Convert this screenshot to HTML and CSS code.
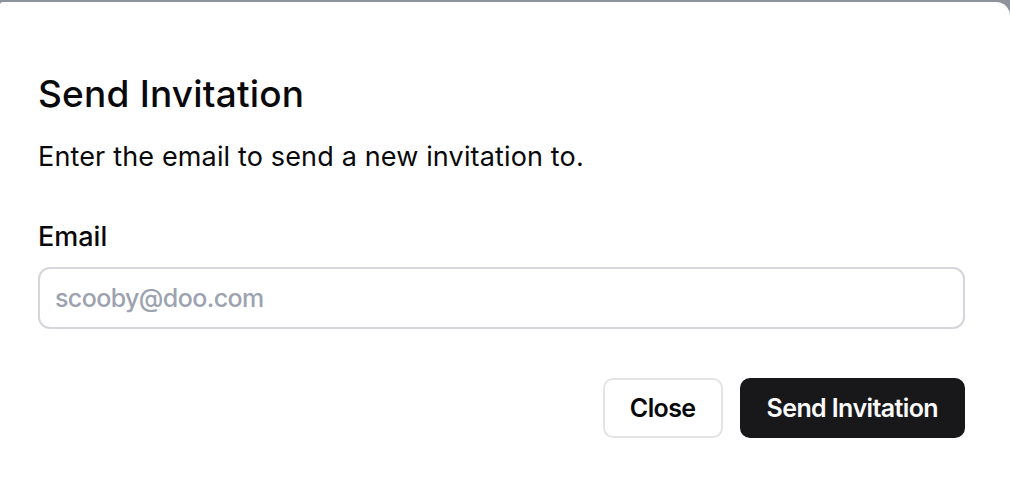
FILE: index.html
```html
<!DOCTYPE html>
<html lang="en">
<head>
<meta charset="utf-8">
<title>Send Invitation</title>
<link rel="stylesheet" href="styles.css">
</head>
<body>
<div class="modal">
  <h2 class="title">Send Invitation</h2>
  <p class="desc">Enter the email to send a new invitation to.</p>
  <label class="label" for="email">Email</label>
  <input class="input" id="email" type="email" placeholder="scooby@doo.com">
  <div class="actions">
    <button class="btn btn-outline">Close</button>
    <button class="btn btn-primary">Send Invitation</button>
  </div>
</div>
</body>
</html>
```
FILE: styles.css
```css
html, body {
  margin: 0;
  padding: 0;
  height: 100%;
}
body {
  background: #8e929b;
  font-family: Inter, "Noto Sans", "Liberation Sans", sans-serif;
  color: #09090b;
  overflow: hidden;
}
.modal {
  margin-top: 2px;
  height: calc(100% - 2px);
  box-sizing: border-box;
  background: #ffffff;
  border-radius: 3px 14px 0 0;
  padding: 72px 45px 0 38px;
  display: flex;
  flex-direction: column;
}
.title {
  margin: 0;
  font-size: 37px;
  line-height: 40px;
  font-weight: 500;
  letter-spacing: 0.2px;
}
.desc {
  margin: 23px 0 0;
  font-size: 27px;
  line-height: 40px;
  font-weight: 400;
  letter-spacing: 0.15px;
}
.label {
  margin-top: 40px;
  font-size: 27px;
  line-height: 40px;
  font-weight: 500;
}
.input {
  margin-top: 10px;
  height: 62px;
  box-sizing: border-box;
  border: 2px solid #d4d6db;
  border-radius: 12px;
  padding: 0 15px;
  font-family: inherit;
  font-size: 25px;
  font-weight: 500;
  letter-spacing: -0.6px;
  color: #09090b;
  outline: none;
  background: #fff;
}
.input::placeholder {
  color: #9ca3af;
}
.actions {
  margin-top: 49px;
  display: flex;
  justify-content: flex-end;
  gap: 17px;
}
.btn {
  height: 60px;
  box-sizing: border-box;
  border-radius: 10px;
  font-family: inherit;
  font-size: 25px;
  font-weight: 600;
  letter-spacing: -0.6px;
  padding: 0 25px;
  cursor: pointer;
}
.btn-outline {
  background: #fff;
  border: 2px solid #e4e4e7;
  color: #09090b;
}
.btn-primary {
  background: #18181b;
  border: 2px solid #18181b;
  color: #fafafa;
}
```
